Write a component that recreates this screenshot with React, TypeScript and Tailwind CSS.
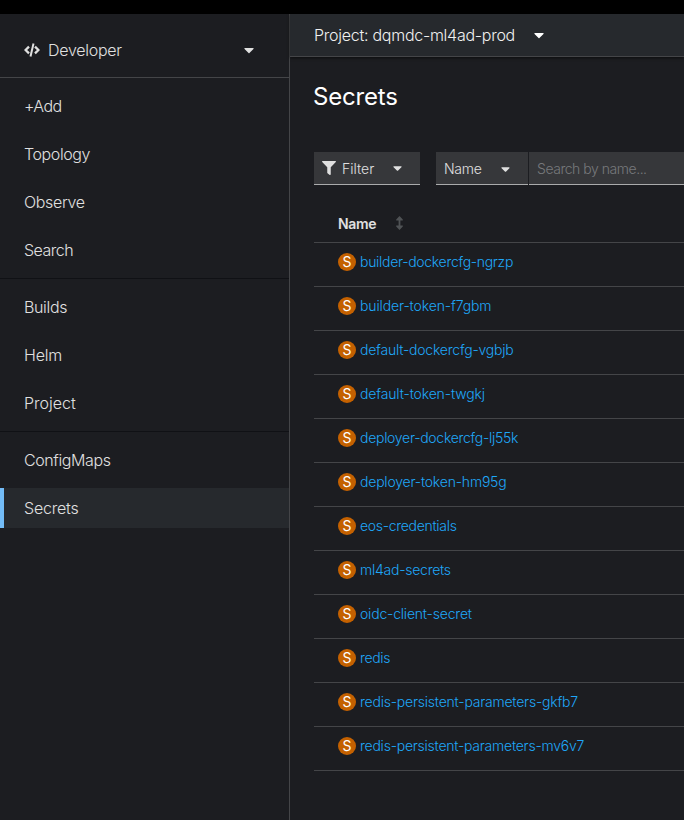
import { FaCaretDown, FaFilter } from "react-icons/fa";

type Item = { label: string; tracking: string; active?: boolean };

const groups: Item[][] = [
  [
    { label: "+Add", tracking: "tracking-[-0.6px]" },
    { label: "Topology", tracking: "tracking-[-0.4px]" },
    { label: "Observe", tracking: "tracking-[-0.35px]" },
    { label: "Search", tracking: "tracking-[-0.5px]" },
  ],
  [
    { label: "Builds", tracking: "tracking-[-0.35px]" },
    { label: "Helm", tracking: "tracking-[-0.2px]" },
    { label: "Project", tracking: "tracking-[0px]" },
  ],
  [
    { label: "ConfigMaps", tracking: "tracking-[-0.4px]" },
    { label: "Secrets", tracking: "tracking-[-0.2px]", active: true },
  ],
];

const secrets: Item[] = [
  { label: "builder-dockercfg-ngrzp", tracking: "tracking-[-0.3px]" },
  { label: "builder-token-f7gbm", tracking: "tracking-[-0.12px]" },
  { label: "default-dockercfg-vgbjb", tracking: "tracking-[-0.22px]" },
  { label: "default-token-twgkj", tracking: "tracking-[-0.15px]" },
  { label: "deployer-dockercfg-lj55k", tracking: "tracking-[-0.28px]" },
  { label: "deployer-token-hm95g", tracking: "tracking-[-0.2px]" },
  { label: "eos-credentials", tracking: "tracking-[-0.3px]" },
  { label: "ml4ad-secrets", tracking: "tracking-[-0.25px]" },
  { label: "oidc-client-secret", tracking: "tracking-[-0.2px]" },
  { label: "redis", tracking: "tracking-[-0.35px]" },
  { label: "redis-persistent-parameters-gkfb7", tracking: "tracking-[-0.22px]" },
  { label: "redis-persistent-parameters-mv6v7", tracking: "tracking-[-0.24px]" },
];

function CodeIcon() {
  return (
    <svg viewBox="0 0 16 14" className="mr-2 h-[14px] w-4 shrink-0" fill="none" stroke="currentColor">
      <path d="M5 3.7 1.6 7 5 10.3M11 3.7 14.4 7 11 10.3" strokeWidth="2.3" />
      <path d="M9.5 .5 6.5 13.5" strokeWidth="2" />
    </svg>
  );
}

function SortIcon() {
  return (
    <svg viewBox="0 0 7 14" className="-ml-px mb-0.5 h-[14px] w-[7px] text-[#4f5255]" fill="currentColor">
      <path d="M3.5 0 6.8 3.4V4.4H4.4V9.6H6.8V10.6L3.5 14 .2 10.6V9.6H2.6V4.4H.2V3.4Z" />
    </svg>
  );
}

function Sidebar() {
  return (
    <aside className="w-[290px] shrink-0 border-r border-[#444548] text-base text-[#e0e0e0]">
      <div className="flex h-16 items-center border-b border-[#444548] pt-[9px] pr-[35px] pl-6">
        <CodeIcon />
        <span className="tracking-[-0.27px]">Developer</span>
        <FaCaretDown className="ml-auto h-4 w-[10px]" />
      </div>
      <nav>
        {groups.map((group, i) => (
          <ul key={i} className={`flex flex-col gap-2 py-2 ${i > 0 ? "border-t border-[#101115]" : ""}`}>
            {group.map((item) => (
              <li
                key={item.label}
                className={`flex h-10 items-center border-l-4 pl-5 ${
                  item.active ? "border-[#73bcf7] bg-[#26292d]" : "border-transparent"
                }`}
              >
                <span className={item.tracking}>{item.label}</span>
              </li>
            ))}
          </ul>
        ))}
      </nav>
    </aside>
  );
}

function Toolbar() {
  return (
    <div className="flex h-[33px] text-sm text-[#e0e0e0]">
      <button className="mr-4 flex w-[106px] items-center border-b border-[#aaabac] bg-[#36373a] pl-2 font-light">
        <FaFilter className="mr-[6px] h-[14px] w-[14px] shrink-0" />
        <span className="pt-0.5">Filter</span>
        <FaCaretDown className="mr-[18px] ml-auto h-[14px] w-[9px]" />
      </button>
      <button className="mr-px flex w-[92px] items-center border-b border-[#aaabac] bg-[#36373a] pt-0.5 pl-2 font-light">
        <span className="tracking-[-0.3px]">Name</span>
        <FaCaretDown className="mr-[18px] ml-auto h-[14px] w-[9px]" />
      </button>
      <div className="flex flex-1 items-center border-b border-[#aaabac] bg-[#36373a] pt-0.5 pl-2 tracking-[-0.47px] text-[#77797c]">
        Search by name...
      </div>
    </div>
  );
}

export default function App() {
  return (
    <div className="flex h-[820px] w-[684px] flex-col overflow-hidden bg-[#1c1d21] font-['Inter',sans-serif] font-light">
      <div className="h-[14px] shrink-0 bg-black" />
      <div className="flex min-h-0 flex-1">
        <Sidebar />
        <main className="min-w-0 flex-1">
          <header className="flex h-[43px] items-center border-b border-[#444548] bg-[#26292d] pl-6 text-base text-[#f0f0f0] shadow-[0_1px_3px_rgba(0,0,0,0.6)]">
            <span className="w-[220px] whitespace-nowrap tracking-[-0.26px]">Project: dqmdc-ml4ad-prod</span>
            <FaCaretDown className="h-4 w-[10px] text-white" />
          </header>
          <div className="pt-6 pl-6">
            <h1 className="-ml-px mb-[39px] text-2xl leading-8 font-normal tracking-[-0.2px] text-white">Secrets</h1>
            <Toolbar />
            <div className="mt-[21px] flex h-[37px] items-center border-b border-[#444548] pl-6 text-sm font-semibold text-[#e0e0e0]">
              <span className="w-[59px] tracking-[-0.35px]">Name</span>
              <SortIcon />
            </div>
            <ul>
              {secrets.map((s) => (
                <li key={s.label} className="flex h-11 items-center border-b border-[#444548] pb-[5px] pl-6 text-sm text-[#1fa7f8]">
                  <span className="mr-1 flex h-[18px] w-[18px] items-center justify-center rounded-full bg-[#c46100] font-normal text-white">
                    S
                  </span>
                  <a className={s.tracking}>{s.label}</a>
                </li>
              ))}
            </ul>
          </div>
        </main>
      </div>
    </div>
  );
}
